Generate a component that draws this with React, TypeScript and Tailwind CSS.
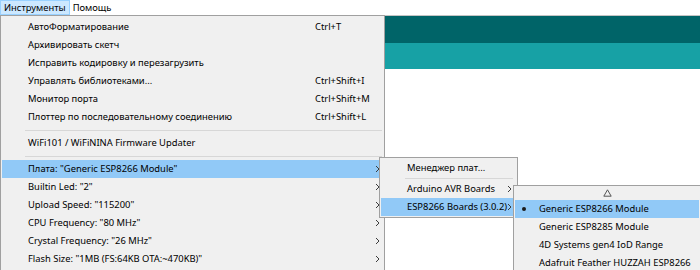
import React from "react";

type Item = {
  label: string;
  shortcut?: string;
  arrow?: boolean;
  active?: boolean;
};
type Row = Item | "sep";

const mainRows: Row[] = [
  { label: "АвтоФорматирование", shortcut: "Ctrl+T" },
  { label: "Архивировать скетч" },
  { label: "Исправить кодировку и перезагрузить" },
  { label: "Управлять библиотеками...", shortcut: "Ctrl+Shift+I" },
  { label: "Монитор порта", shortcut: "Ctrl+Shift+M" },
  { label: "Плоттер по последовательному соединению", shortcut: "Ctrl+Shift+L" },
  "sep",
  { label: "WiFi101 / WiFiNINA Firmware Updater" },
  "sep",
  { label: 'Плата: "Generic ESP8266 Module"', arrow: true, active: true },
  { label: 'Builtin Led: "2"', arrow: true },
  { label: 'Upload Speed: "115200"', arrow: true },
  { label: 'CPU Frequency: "80 MHz"', arrow: true },
  { label: 'Crystal Frequency: "26 MHz"', arrow: true },
  { label: 'Flash Size: "1MB (FS:64KB OTA:~470KB)"', arrow: true },
];

const boards: { label: string; checked?: boolean }[] = [
  { label: "Generic ESP8266 Module", checked: true },
  { label: "Generic ESP8285 Module" },
  { label: "4D Systems gen4 IoD Range" },
  { label: "Adafruit Feather HUZZAH ESP8266" },
];

function Chevron() {
  return (
    <svg width="5" height="8" viewBox="0 0 5 8" className="shrink-0">
      <path d="M1 1l3 3-3 3" fill="none" stroke="#3c3c3c" strokeWidth="1" />
    </svg>
  );
}

export default function App() {
  return (
    <div
      className="relative h-[270px] w-[700px] overflow-hidden bg-white text-[9.4px] leading-none text-black"
      style={{ fontFamily: '"Noto Sans", "DejaVu Sans", sans-serif' }}
    >
      {/* menu bar */}
      <div className="flex h-[16px] items-stretch border-b border-[#c4c4c4] bg-white">
        <div className="flex items-center border border-[#99d1ff] bg-[#cce8ff] px-[3px]">Инструменты</div>
        <div className="flex items-center px-[3px]">Помощь</div>
      </div>

      {/* editor behind the menus */}
      <div className="h-[27px] bg-[#006468]" />
      <div className="h-[26px] bg-[#17a1a5]" />

      {/* Инструменты menu */}
      <div className="absolute left-0 top-[15px] h-[262px] w-[385px] border border-[#a0a0a0] bg-[#f0f0f0] px-[1px] pt-[2px]">
        {mainRows.map((row, i) =>
          row === "sep" ? (
            <div key={i} className="flex h-[8px] items-center pl-[23px] pr-[1px]">
              <div className="h-px w-full bg-[#d7d7d7]" />
            </div>
          ) : (
            <div
              key={i}
              className={`flex h-[18px] items-center ${row.active ? "bg-[#91c9f7]" : ""}`}
            >
              <span className="w-[313px] shrink-0 whitespace-nowrap pl-[26px]">{row.label}</span>
              <span className="whitespace-nowrap">{row.shortcut}</span>
              {row.arrow && (
                <span className="ml-auto mr-[3px] flex">
                  <Chevron />
                </span>
              )}
            </div>
          )
        )}
      </div>

      {/* Плата submenu */}
      <div className="absolute left-[379px] top-[157px] w-[139px] border border-[#a0a0a0] bg-[#f0f0f0] px-[1px] py-[1px]">
        <div className="flex h-[18px] items-center pl-[26px]">Менеджер плат...</div>
        <div className="flex h-[3px] items-center pl-[24px] pr-[3px]">
          <div className="h-px w-full bg-[#d7d7d7]" />
        </div>
        <div className="flex h-[18px] items-center pl-[26px]">
          <span className="whitespace-nowrap">Arduino AVR Boards</span>
          <span className="ml-auto mr-[4px] flex">
            <Chevron />
          </span>
        </div>
        <div className="flex h-[18px] items-center bg-[#91c9f7] pl-[26px]">
          <span className="whitespace-nowrap">ESP8266 Boards (3.0.2)</span>
          <span className="ml-auto mr-[4px] flex">
            <Chevron />
          </span>
        </div>
      </div>

      {/* ESP8266 Boards submenu */}
      <div className="absolute left-[513px] top-[185px] h-[90px] w-[188px] border border-[#a0a0a0] bg-[#f0f0f0] px-[1px]">
        <div className="flex h-[14px] items-center justify-center">
          <svg width="9" height="8" viewBox="0 0 9 8">
            <path d="M4.5 0.8L8.2 7.2H0.8Z" fill="none" stroke="#555" strokeWidth="1" />
          </svg>
        </div>
        {boards.map((b) => (
          <div
            key={b.label}
            className={`flex h-[18px] items-center ${b.checked ? "bg-[#91c9f7]" : ""}`}
          >
            <span className="flex w-[18px] shrink-0 justify-center">
              {b.checked && <span className="h-[4px] w-[4px] rounded-full bg-[#1a1a1a]" />}
            </span>
            <span className="whitespace-nowrap pl-[6px]">{b.label}</span>
          </div>
        ))}
      </div>
    </div>
  );
}
